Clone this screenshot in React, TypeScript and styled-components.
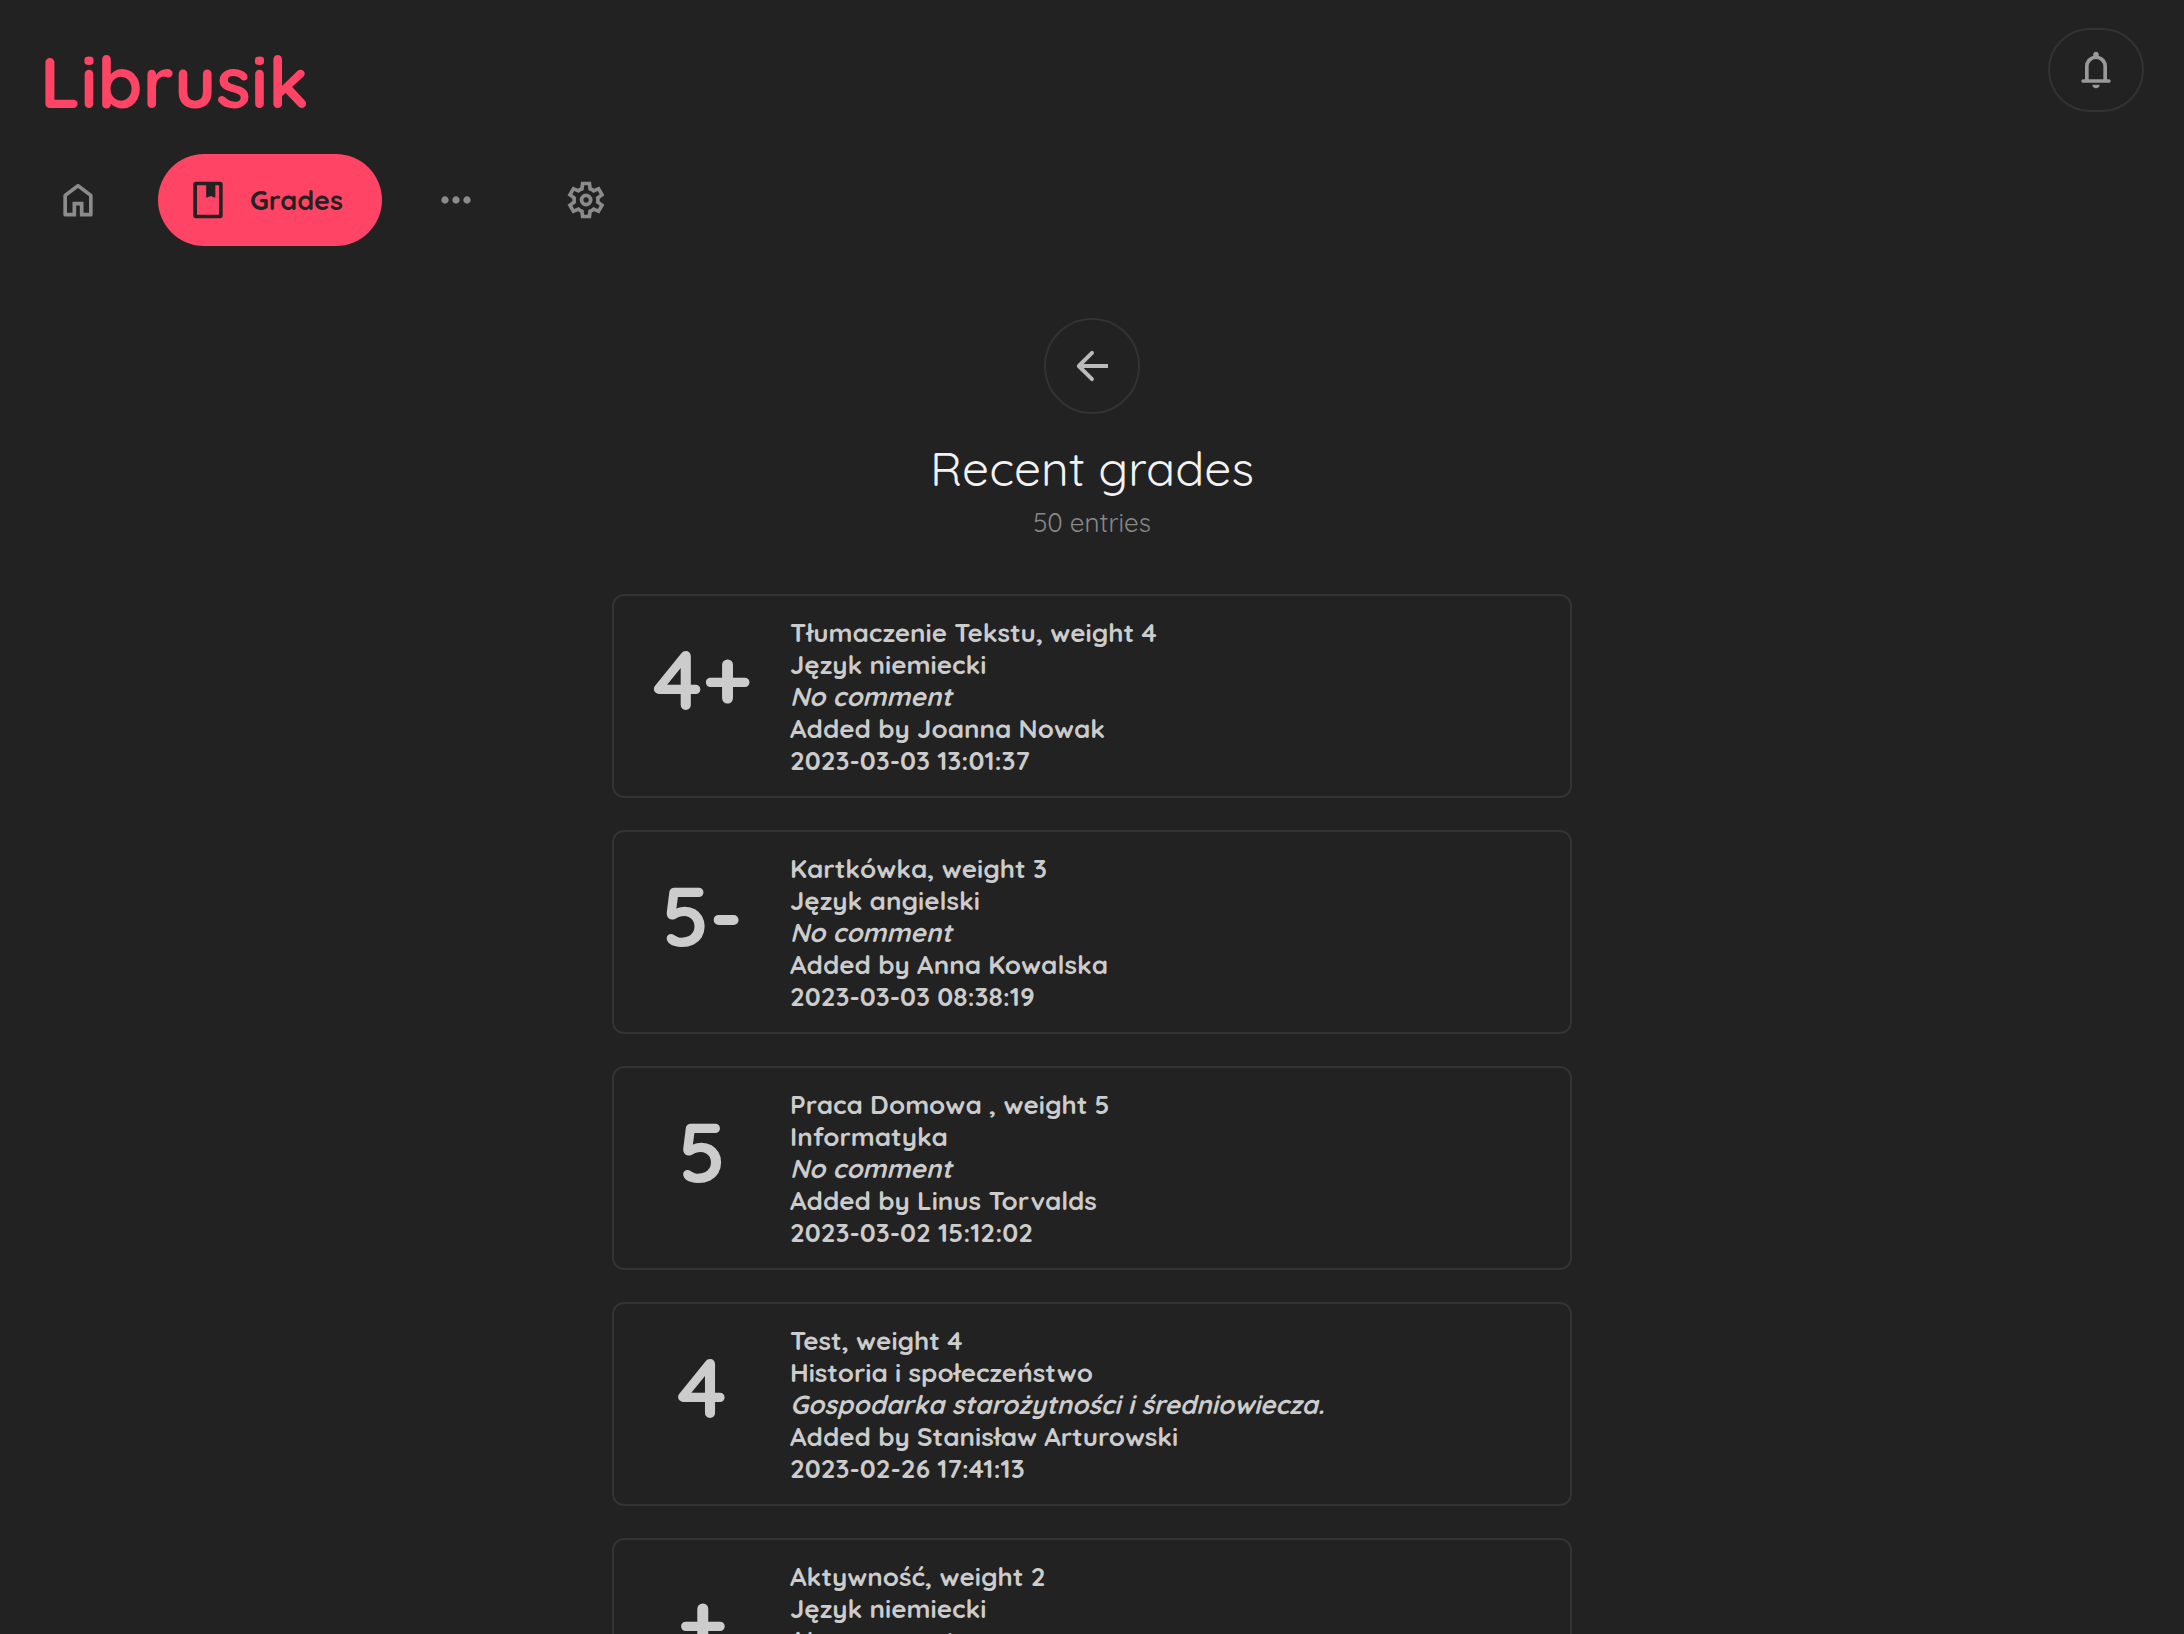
import React from "react";
import styled, { createGlobalStyle, css } from "styled-components";

const GlobalStyle = createGlobalStyle`
  *, *::before, *::after { box-sizing: border-box; }
  body {
    margin: 0;
    background: #222222;
    color: #cccccc;
    font-family: Quicksand, Lato, sans-serif;
    font-size: 26px;
    line-height: 32px;
  }
`;

const Page = styled.div`
  height: 100vh;
  overflow-y: auto;
  scrollbar-width: none;
`;

const Header = styled.header`
  display: flex;
  align-items: flex-start;
  justify-content: space-between;
  padding: 28px 40px 0;
`;

const Brand = styled.h1`
  margin: 0;
  color: #ff4465;
  font-size: 72px;
  line-height: 106px;
  font-weight: 700;
`;

const OutlineButton = styled.button<{ $height: number; $color: string }>`
  display: flex;
  align-items: center;
  justify-content: center;
  width: 96px;
  height: ${(p) => p.$height}px;
  padding: 0;
  border: 2px solid #333333;
  border-radius: 48px;
  background: transparent;
  color: ${(p) => p.$color};
  cursor: pointer;
`;

const Nav = styled.nav`
  display: flex;
  gap: 18px;
  margin-top: 20px;
  padding: 0 22px;
`;

const NavLink = styled.a<{ $active?: boolean }>`
  display: flex;
  align-items: center;
  justify-content: center;
  gap: 20px;
  min-width: 112px;
  height: 92px;
  border-radius: 46px;
  color: #8b8b8b;
  font-size: 27px;
  line-height: 34px;
  font-weight: 700;
  text-decoration: none;
  ${(p) =>
    p.$active &&
    css`
      justify-content: flex-start;
      min-width: 224px;
      margin-left: 6px;
      padding: 0 38px 0 28px;
      background: #ff4465;
      color: #222222;
    `}
`;

const Icon = styled.svg<{ $size: number }>`
  flex: none;
  width: ${(p) => p.$size}px;
  height: ${(p) => p.$size}px;
  fill: currentColor;
`;

const Main = styled.main`
  display: flex;
  flex-direction: column;
  align-items: center;
  padding: 72px 24px 32px;
`;

const Title = styled.h2`
  margin: 24px 0 9px;
  color: #f2f2f2;
  font-size: 48px;
  line-height: 60px;
  font-weight: 400;
`;

const Subtitle = styled.p`
  margin: 0;
  color: #888888;
  font-weight: 400;
`;

const GradeList = styled.ul`
  display: flex;
  flex-direction: column;
  gap: 32px;
  width: 100%;
  max-width: 960px;
  margin: 55px 0 0;
  padding: 0;
  list-style: none;
`;

const Card = styled.li`
  display: grid;
  grid-template-columns: 176px 1fr;
  min-height: 204px;
  padding: 21px 20px 19px 0;
  border: 2px solid #333333;
  border-radius: 12px;
`;

const Mark = styled.strong`
  font-size: 84px;
  line-height: 124px;
  font-weight: 700;
  text-align: center;
`;

const Details = styled.div`
  font-weight: 700;
`;

const Line = styled.p`
  margin: 0;
`;

const Comment = styled(Line)`
  font-style: italic;
`;

const paths = {
  home: "M5 21q-1 0-1-1V9.5q0-.5.4-.8l7-5.3q.6-.4 1.2 0l7 5.3q.4.3.4.8V20q0 1-1 1h-6v-6h-2v6ZM6 19h3v-6h6v6h3v-9l-6-4.5L6 10Z",
  book: "M5.5 2H18.5Q20 2 20 3.5V20.5Q20 22 18.5 22H5.5Q4 22 4 20.5V3.5Q4 2 5.5 2ZM6 4V20H18V4H16V10.3Q16 10.9 15.5 10.7L13.5 9.8L11.5 10.7Q11 10.9 11 10.3V4Z",
  more: "M6 14q-.825 0-1.413-.588T4 12q0-.825.587-1.413T6 10q.825 0 1.413.587T8 12q0 .825-.587 1.412T6 14Zm6 0q-.825 0-1.413-.588T10 12q0-.825.587-1.413T12 10q.825 0 1.413.587T14 12q0 .825-.587 1.412T12 14Zm6 0q-.825 0-1.413-.588T16 12q0-.825.587-1.413T18 10q.825 0 1.413.587T20 12q0 .825-.587 1.412T18 14Z",
  settings:
    "m9.25 22-.4-3.2q-.325-.125-.613-.3-.287-.175-.562-.375L4.7 19.375l-2.75-4.75 2.575-1.95Q4.5 12.5 4.5 12.338v-.675q0-.163.025-.338L1.95 9.375l2.75-4.75 2.975 1.25q.275-.2.575-.375.3-.175.6-.3l.4-3.2h5.5l.4 3.2q.325.125.613.3.287.175.562.375l2.975-1.25 2.75 4.75-2.575 1.95q.025.175.025.338v.674q0 .163-.05.338l2.575 1.95-2.75 4.75-2.95-1.25q-.275.2-.575.375-.3.175-.6.3l-.4 3.2Zm2.8-6.5q1.45 0 2.475-1.025Q15.55 13.45 15.55 12q0-1.45-1.025-2.475Q13.5 8.5 12.05 8.5q-1.475 0-2.488 1.025Q8.55 10.55 8.55 12q0 1.45 1.012 2.475Q10.575 15.5 12.05 15.5Zm0-2q-.625 0-1.062-.438-.438-.437-.438-1.062t.438-1.062q.437-.438 1.062-.438t1.063.438q.437.437.437 1.062t-.437 1.062q-.438.438-1.063.438ZM11 20h1.975l.35-2.65q.775-.2 1.438-.588.662-.387 1.212-.937l2.475 1.025.975-1.7-2.15-1.625q.125-.35.175-.738.05-.387.05-.787t-.05-.788q-.05-.387-.175-.737l2.15-1.625-.975-1.7-2.475 1.05q-.55-.575-1.212-.963-.663-.387-1.438-.587L13 4h-1.975l-.35 2.65q-.775.2-1.437.587-.663.388-1.213.938L5.55 7.15l-.975 1.7 2.15 1.6q-.125.375-.175.75-.05.375-.05.8 0 .4.05.775.05.375.175.75l-2.15 1.625.975 1.7 2.475-1.05q.55.575 1.213.962.662.388 1.437.588Z",
  bell: "M5 19q-.425 0-.713-.288T4 18q0-.425.287-.713T5 17h1v-7q0-2.075 1.25-3.688T10.5 4.2v-.7q0-.625.438-1.063T12 2q.625 0 1.063.438T13.5 3.5v.7q2 .5 3.25 2.113T18 10v7h1q.425 0 .713.288T20 18q0 .425-.288.713T19 19Zm7 3q-.825 0-1.413-.588T10 20h4q0 .825-.588 1.413T12 22ZM8 17h8v-7q0-1.65-1.175-2.825T12 6q-1.65 0-2.825 1.175T8 10Z",
  back: "m11.3 19.3-6.6-6.6q-.7-.7 0-1.4l6.6-6.6q.7-.7 1.4 0 .7.7 0 1.4L7.83 11H20v2H7.83l4.87 4.9q.7.7 0 1.4-.7.7-1.4 0Z",
};

function Glyph({ name, size = 44 }: { name: keyof typeof paths; size?: number }) {
  return (
    <Icon $size={size} viewBox="0 0 24 24" aria-hidden="true">
      <path fillRule="evenodd" d={paths[name]} />
    </Icon>
  );
}

type Grade = {
  mark: string;
  title: string;
  subject: string;
  comment: string;
  teacher?: string;
  date?: string;
};

const grades: Grade[] = [
  {
    mark: "4+",
    title: "Tłumaczenie Tekstu, weight 4",
    subject: "Język niemiecki",
    comment: "No comment",
    teacher: "Joanna Nowak",
    date: "2023-03-03 13:01:37",
  },
  {
    mark: "5-",
    title: "Kartkówka, weight 3",
    subject: "Język angielski",
    comment: "No comment",
    teacher: "Anna Kowalska",
    date: "2023-03-03 08:38:19",
  },
  {
    mark: "5",
    title: "Praca Domowa , weight 5",
    subject: "Informatyka",
    comment: "No comment",
    teacher: "Linus Torvalds",
    date: "2023-03-02 15:12:02",
  },
  {
    mark: "4",
    title: "Test, weight 4",
    subject: "Historia i społeczeństwo",
    comment: "Gospodarka starożytności i średniowiecza.",
    teacher: "Stanisław Arturowski",
    date: "2023-02-26 17:41:13",
  },
  {
    mark: "+",
    title: "Aktywność, weight 2",
    subject: "Język niemiecki",
    comment: "No comment",
  },
];

function GradeCard({ grade }: { grade: Grade }) {
  return (
    <Card>
      <Mark>{grade.mark}</Mark>
      <Details>
        <Line>{grade.title}</Line>
        <Line>{grade.subject}</Line>
        <Comment>{grade.comment}</Comment>
        {grade.teacher && <Line>Added by {grade.teacher}</Line>}
        {grade.date && <Line>{grade.date}</Line>}
      </Details>
    </Card>
  );
}

export default function App() {
  return (
    <Page>
      <GlobalStyle />
      <Header>
        <Brand>Librusik</Brand>
        <OutlineButton type="button" aria-label="Notifications" $height={84} $color="#999999">
          <Glyph name="bell" />
        </OutlineButton>
      </Header>
      <Nav>
        <NavLink href="#home" aria-label="Home">
          <Glyph name="home" />
        </NavLink>
        <NavLink href="#grades" aria-current="page" $active>
          <Glyph name="book" />
          Grades
        </NavLink>
        <NavLink href="#more" aria-label="More">
          <Glyph name="more" />
        </NavLink>
        <NavLink href="#settings" aria-label="Settings">
          <Glyph name="settings" />
        </NavLink>
      </Nav>
      <Main>
        <OutlineButton type="button" aria-label="Back" $height={96} $color="#bbbbbb">
          <Glyph name="back" size={48} />
        </OutlineButton>
        <Title>Recent grades</Title>
        <Subtitle>50 entries</Subtitle>
        <GradeList>
          {grades.map((grade) => (
            <GradeCard key={grade.title} grade={grade} />
          ))}
        </GradeList>
      </Main>
    </Page>
  );
}
